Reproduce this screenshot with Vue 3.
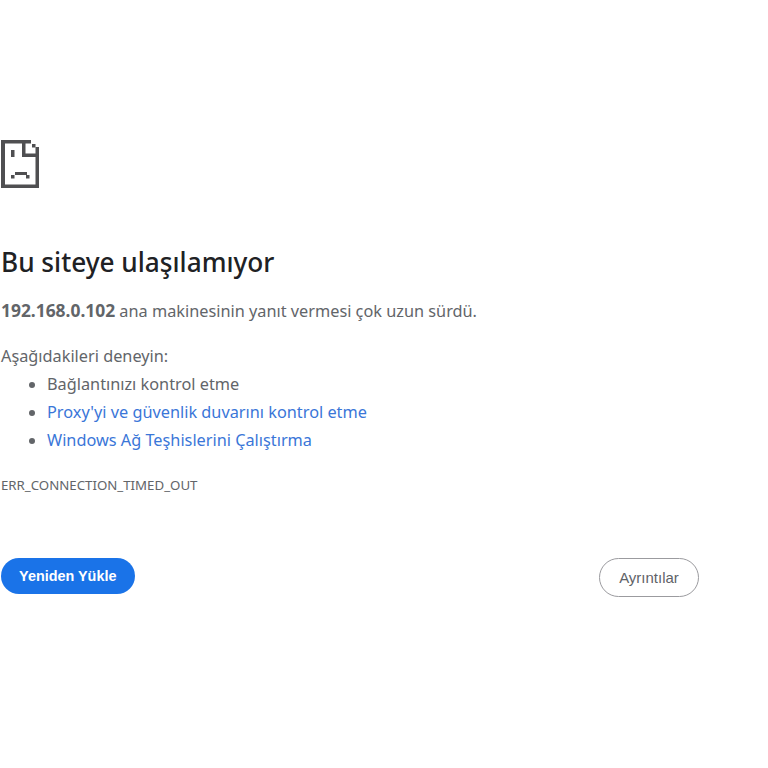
<template>
  <main class="page">
    <svg class="icon" width="40" height="50" viewBox="0 0 40 50" aria-hidden="true">
      <g fill="#4f4f51">
        <rect x="1" y="0" width="30" height="3.5" />
        <rect x="1" y="0" width="4" height="48" />
        <rect x="1" y="44.5" width="38" height="3.5" />
        <rect x="35.5" y="7" width="3.5" height="41" />
        <rect x="22" y="0" width="3.5" height="17" />
        <rect x="22" y="13.5" width="14" height="3.5" />
        <rect x="32" y="4" width="3.5" height="3.5" />
        <rect x="11" y="10" width="3.5" height="7" />
        <rect x="15" y="32" width="12" height="3" />
        <rect x="11" y="35" width="3.5" height="3.5" />
        <rect x="26" y="35" width="3.5" height="3.5" />
      </g>
    </svg>
    <h1 class="title">Bu siteye ulaşılamıyor</h1>
    <p class="summary"><strong>192.168.0.102</strong> ana makinesinin yanıt vermesi çok uzun sürdü.</p>
    <p class="try">Aşağıdakileri deneyin:</p>
    <ul class="suggestions">
      <li v-for="item in suggestions" :key="item.text">
        <a v-if="item.link" href="#" class="link" @click.prevent>{{ item.text }}</a>
        <span v-else>{{ item.text }}</span>
      </li>
    </ul>
    <p class="code">ERR_CONNECTION_TIMED_OUT</p>
    <div class="actions">
      <button type="button" class="reload">Yeniden Yükle</button>
      <button type="button" class="details">Ayrıntılar</button>
    </div>
  </main>
</template>

<script setup>
const suggestions = [
  { text: 'Bağlantınızı kontrol etme', link: false },
  { text: "Proxy'yi ve güvenlik duvarını kontrol etme", link: true },
  { text: 'Windows Ağ Teşhislerini Çalıştırma', link: true }
]
</script>

<style scoped>
.page {
  box-sizing: border-box;
  width: 768px;
  height: 768px;
  padding: 140px 69px 0 1px;
  background: #fff;
  font-family: "Noto Sans", "Open Sans", sans-serif;
  color: #626569;
  overflow: hidden;
}
.icon {
  display: block;
  margin-left: -1px;
}
.title {
  margin: 52px 0 0;
  font-size: 26.2px;
  line-height: 40px;
  font-weight: 500;
  color: #202124;
}
.summary {
  margin: 16px 0 0;
  font-size: 16.3px;
  line-height: 24px;
}
.summary strong {
  font-size: 17.4px;
  font-weight: 700;
}
.try {
  margin: 21px 0 0;
  font-size: 16.3px;
  line-height: 24px;
}
.suggestions {
  margin: 2px 0 0;
  padding: 0 0 0 46px;
  font-size: 16.3px;
  line-height: 28px;
}
.link {
  color: #3a76d8;
  text-decoration: none;
}
.code {
  margin: 21px 0 0;
  font-size: 13.25px;
  line-height: 20px;
}
.actions {
  display: flex;
  justify-content: space-between;
  align-items: flex-start;
  margin-top: 63px;
}
button {
  font-family: "Liberation Sans", Arial, sans-serif;
  font-size: 15px;
  cursor: pointer;
}
.reload {
  width: 133.5px;
  height: 36px;
  padding: 0;
  border: 0;
  border-radius: 18px;
  background: #1a73e8;
  color: #fff;
  font-size: 14.4px;
  font-weight: 700;
}
.details {
  width: 100px;
  height: 39px;
  padding: 0;
  border: 1px solid #9b9b9f;
  border-radius: 20px;
  background: #fff;
  color: #5f6368;
}
</style>
